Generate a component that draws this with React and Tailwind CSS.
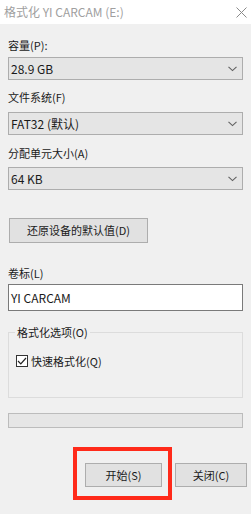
import React from 'react';

const font = { fontFamily: '"Noto Sans CJK SC", "Liberation Sans", sans-serif' };

function Chevron() {
    return (
        <svg width="9" height="6" viewBox="0 0 9 6" className="mr-[3px]">
            <path d="M0.5 0.8 L4.5 4.6 L8.5 0.8" fill="none" stroke="#606060" strokeWidth="1.1" />
        </svg>
    );
}

function Select({ value, className = '' }) {
    return (
        <div className={`mx-2 h-[23px] flex items-center justify-between bg-[#e5e5e5] border border-[#adadad] pl-[2px] pr-[2px] text-[12px] text-[#1a1a1a] ${className}`}>
            <span>{value}</span>
            <Chevron />
        </div>
    );
}

function Label({ children, className = '' }) {
    return <div className={`mx-2 h-4 leading-4 text-[11px] text-[#1a1a1a] ${className}`}>{children}</div>;
}

export default function App() {
    return (
        <div className="w-[251px] h-[514px] bg-[#f0f0f0] flex flex-col overflow-hidden" style={font}>
            {/* barra de título */}
            <div className="h-6 bg-white flex items-center justify-between pl-1 pr-[4px] shrink-0">
                <span className="text-[12px] text-[#a0a0a0] leading-4">格式化 YI CARCAM (E:)</span>
                <svg width="11" height="11" viewBox="0 0 11 11">
                    <path d="M0.5 0.5 L10.5 10.5 M10.5 0.5 L0.5 10.5" stroke="#8a8a8a" strokeWidth="1" />
                </svg>
            </div>

            <Label className="mt-[13px]">容量(P):</Label>
            <Select value="28.9 GB" className="mt-[4px]" />

            <Label className="mt-[9px]">文件系统(F)</Label>
            <Select value="FAT32 (默认)" className="mt-[7px]" />

            <Label className="mt-[10px]">分配单元大小(A)</Label>
            <Select value="64 KB" className="mt-[6px]" />

            <div className="ml-[9px] mt-[28px] w-[139px] h-[25px] bg-[#e1e1e1] border border-[#adadad] flex items-center justify-center text-[11px] text-[#1a1a1a]">
                还原设备的默认值(D)
            </div>

            <Label className="mt-[22px]">卷标(L)</Label>
            <div className="mx-2 mt-[3px] h-[27px] bg-white border border-[#7a7a7a] flex items-center pl-[2px] text-[12px] text-[#1a1a1a]">
                YI CARCAM
            </div>

            {/* grupo de opciones */}
            <div className="mx-2 mt-[21px] h-[66px] border border-[#dcdcdc] relative">
                <span className="absolute left-[6px] -top-[9px] px-[2px] bg-[#f0f0f0] text-[11px] leading-4 text-[#1a1a1a]">格式化选项(O)</span>
                <div className="ml-[7px] mt-[20px] flex items-center gap-[3px]">
                    <div className="w-[12px] h-[12px] border border-[#333] bg-white flex items-center justify-center">
                        <svg width="10" height="8" viewBox="0 0 10 8">
                            <path d="M1 4 L3.8 6.8 L9 1" fill="none" stroke="#222" strokeWidth="1.2" />
                        </svg>
                    </div>
                    <span className="text-[11px] leading-4 text-[#1a1a1a]">快速格式化(Q)</span>
                </div>
            </div>

            {/* barra de progreso */}
            <div className="mx-2 mt-[15px] h-[15px] bg-[#e6e6e6] border border-[#bcbcbc]" />

            {/* botones */}
            <div className="mt-[19px] flex items-start justify-end pr-[4px]">
                <div className="border-4 border-[#ff2a1a] pl-[8px] pr-[6px] pt-[12px] pb-[9px]">
                    <div className="w-[77px] h-[24px] bg-[#e1e1e1] border border-[#adadad] flex items-center justify-center text-[11px] text-[#1a1a1a]">
                        开始(S)
                    </div>
                </div>
                <div className="ml-[3px] mt-[16px] w-[72px] h-[24px] bg-[#e1e1e1] border border-[#adadad] flex items-center justify-center text-[11px] text-[#1a1a1a]">
                    关闭(C)
                </div>
            </div>
        </div>
    );
}
